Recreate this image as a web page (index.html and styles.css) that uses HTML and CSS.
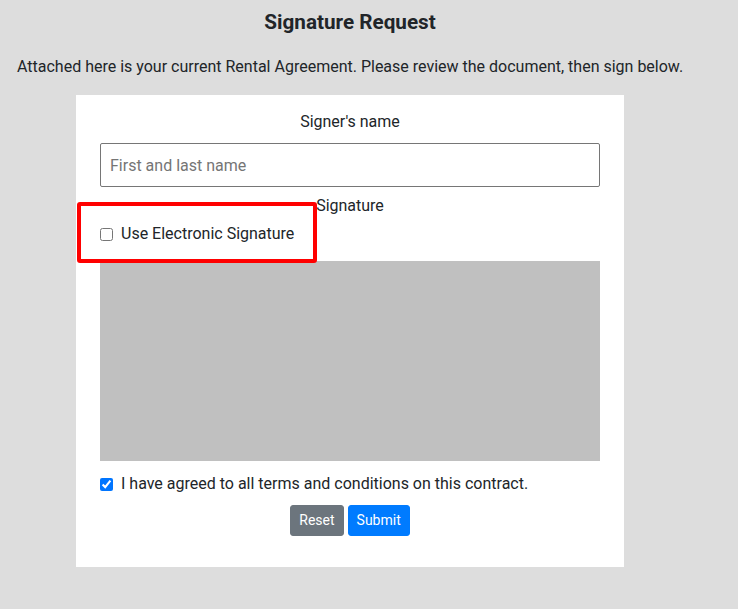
FILE: index.html
```html
<!DOCTYPE html>
<html>
<head>
<meta charset="utf-8">
<link rel="stylesheet" href="styles.css">
</head>
<body>
<div class="page">
  <h1 class="title">Signature Request</h1>
  <p class="intro">Attached here is your current Rental Agreement. Please review the document, then sign below.</p>
  <div class="card">
    <div class="label">Signer's name</div>
    <input class="name-input" type="text" placeholder="First and last name">
    <div class="label sig-label">Signature</div>
    <label class="check-row esig">
      <input type="checkbox" class="check">
      <span>Use Electronic Signature</span>
      <span class="highlight"></span>
    </label>
    <div class="sig-pad"></div>
    <label class="check-row agree">
      <input type="checkbox" class="check" checked>
      <span>I have agreed to all terms and conditions on this contract.</span>
    </label>
    <div class="actions">
      <button class="btn btn-reset">Reset</button>
      <button class="btn btn-submit">Submit</button>
    </div>
  </div>
</div>
</body>
</html>
```

FILE: styles.css
```css
* { box-sizing: border-box; }
html, body {
  margin: 0;
  padding: 0;
  background: #dddddd;
  font-family: Roboto, "Liberation Sans", sans-serif;
  color: #212529;
}
.page {
  width: 666px;
  margin-left: 17px;
  padding-top: 7px;
}
.title {
  margin: 0;
  font-size: 20.7px;
  line-height: 31px;
  font-weight: 700;
  text-align: center;
}
.intro {
  margin: 17px 0 16px 0;
  font-size: 16px;
  line-height: 24px;
  white-space: nowrap;
}
.card {
  width: 548px;
  margin: 0 auto;
  background: #ffffff;
  padding: 15px 24px 31px 24px;
  display: flex;
  flex-direction: column;
}
.label {
  font-size: 16px;
  line-height: 24px;
  text-align: center;
}
.name-input {
  margin-top: 9px;
  width: 500px;
  height: 44px;
  border: 1px solid #767676;
  border-radius: 2px;
  padding: 0 9px;
  font-family: Roboto, "Liberation Sans", sans-serif;
  font-size: 16px;
  color: #212529;
  background: #fff;
}
.name-input::placeholder { color: #757575; }
.sig-label { margin-top: 7px; }
.check-row {
  display: flex;
  align-items: center;
  gap: 8px;
  font-size: 16px;
  line-height: 24px;
}
.esig {
  position: relative;
  margin-top: 4px;
}
.check {
  margin: 0;
  width: 13px;
  height: 13px;
}
.highlight {
  position: absolute;
  left: -23px;
  top: -20px;
  width: 240px;
  height: 61px;
  border: 4px solid #ff0000;
  border-radius: 3px;
  pointer-events: none;
}
.sig-pad {
  margin-top: 15px;
  width: 500px;
  height: 200px;
  background: #c0c0c0;
}
.agree { margin-top: 11px; }
.actions {
  margin-top: 9px;
  display: flex;
  justify-content: center;
  gap: 4px;
}
.btn {
  font-family: Roboto, "Liberation Sans", sans-serif;
  font-size: 14px;
  line-height: 21px;
  padding: 4px 8px;
  border: 1px solid transparent;
  border-radius: 3px;
  color: #fff;
}
.btn-reset { background: #6c757d; border-color: #6c757d; }
.btn-submit { background: #007bff; border-color: #007bff; }
```
